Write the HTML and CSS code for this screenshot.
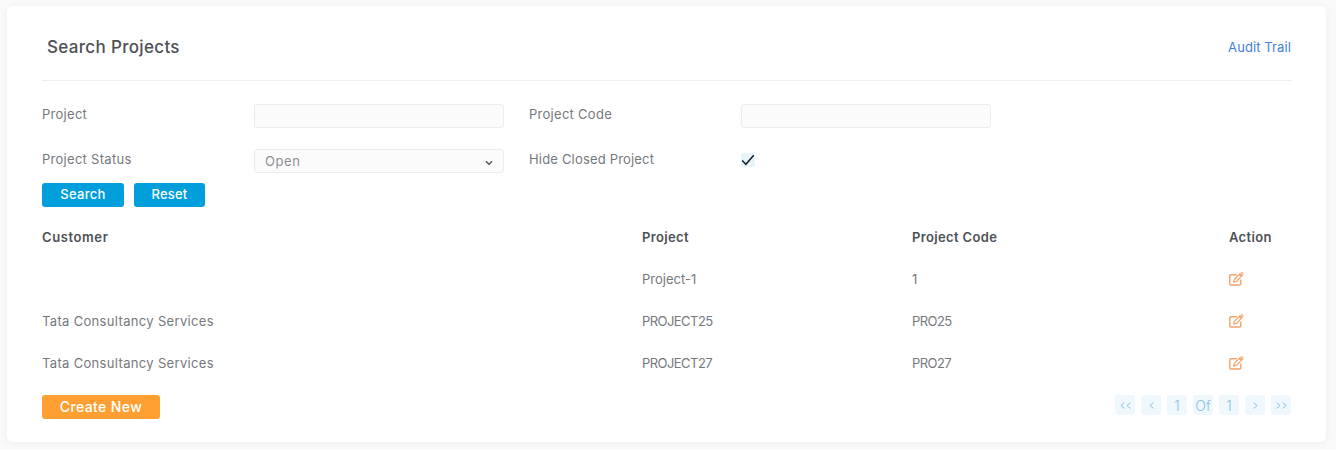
FILE: index.html
```html
<!DOCTYPE html>
<html lang="en">
<head>
<meta charset="utf-8">
<title>Search Projects</title>
<link rel="stylesheet" href="styles.css">
</head>
<body>
<svg class="sprite" width="0" height="0" aria-hidden="true">
  <symbol id="edit" viewBox="0 0 15 14">
    <path d="M11.800 7.400v4.600a1 1 0 0 1-1 1H1.800a1 1 0 0 1-1-1V3.700a1 1 0 0 1 1-1h6" fill="none" stroke="currentColor" stroke-width="1.400"/>
    <path d="M4.800 10l.6-2.600 5.800-5.800 2 2-5.800 5.800zM10.300 2.500l2 2" fill="none" stroke="currentColor" stroke-width="1.200"/>
    <circle cx="12.900" cy="1.800" r="1.200" fill="#fff" stroke="currentColor" stroke-width="1"/>
  </symbol>
  <symbol id="left" viewBox="0 0 5 7"><path d="M4.400.7L.9 3.500l3.500 2.800" fill="none" stroke="currentColor" stroke-width="1"/></symbol>
  <symbol id="right" viewBox="0 0 5 7"><path d="M.6.7l3.500 2.800L.6 6.300" fill="none" stroke="currentColor" stroke-width="1"/></symbol>
</svg>
<main class="card">
  <header class="card-head">
    <h1 class="title">Search Projects</h1>
    <a class="audit" href="#">Audit Trail</a>
  </header>
  <form class="filters">
    <label class="lbl">Project</label>
    <input class="field" type="text">
    <label class="lbl">Project Code</label>
    <input class="field" type="text">
    <label class="lbl">Project Status</label>
    <div class="field select">
      <span>Open</span>
      <svg class="chev" viewBox="0 0 8 6" width="8" height="6"><path d="M1 1.200l3 3 3-3" fill="none" stroke="#555" stroke-width="1.400"/></svg>
    </div>
    <label class="lbl lbl-tight">Hide Closed Project</label>
    <div class="check">
      <svg viewBox="0 0 14 14" width="14" height="14"><path d="M1.200 7.400l3.700 3.900 7.800-9" fill="none" stroke="#15202b" stroke-width="1.500"/></svg>
    </div>
  </form>
  <div class="actions">
    <button class="btn btn-search" type="button">Search</button>
    <button class="btn btn-reset" type="button">Reset</button>
  </div>
  <table class="results">
    <thead>
      <tr><th class="c1">Customer</th><th class="c2">Project</th><th class="c3">Project Code</th><th class="c4">Action</th></tr>
    </thead>
    <tbody>
      <tr><td></td><td class="plain">Project-1</td><td class="caps">1</td><td><svg class="edit"><use href="#edit"/></svg></td></tr>
      <tr><td class="name">Tata Consultancy Services</td><td class="caps">PROJECT25</td><td class="caps">PRO25</td><td><svg class="edit"><use href="#edit"/></svg></td></tr>
      <tr><td class="name">Tata Consultancy Services</td><td class="caps">PROJECT27</td><td class="caps">PRO27</td><td><svg class="edit"><use href="#edit"/></svg></td></tr>
    </tbody>
  </table>
  <footer class="card-foot">
    <button class="btn btn-create" type="button">Create New</button>
    <nav class="pager">
      <span class="pg"><svg class="arr"><use href="#left"/></svg><svg class="arr"><use href="#left"/></svg></span>
      <span class="pg"><svg class="arr"><use href="#left"/></svg></span>
      <span class="pg">1</span>
      <span class="pg">Of</span>
      <span class="pg">1</span>
      <span class="pg"><svg class="arr"><use href="#right"/></svg></span>
      <span class="pg"><svg class="arr"><use href="#right"/></svg><svg class="arr"><use href="#right"/></svg></span>
    </nav>
  </footer>
</main>
</body>
</html>
```
FILE: styles.css
```css
* { box-sizing: border-box; }
html, body { margin: 0; }
body {
  background: #f9f9f9;
  padding: 6px 10px 8px 7px;
  font-family: "Inter", "Liberation Sans", sans-serif;
  color: #75797e;
  font-size: 13px;
}
.sprite { position: absolute; }
.card {
  background: #fff;
  border-radius: 6px;
  box-shadow: 0 1px 8px rgba(0, 0, 0, .05);
  height: 436px;
  padding: 0 34px 0 35px;
}
.card-head {
  height: 75px;
  border-bottom: 1px solid #eeeeee;
  display: flex;
  align-items: center;
  justify-content: space-between;
  padding: 8px 0 0 5px;
}
.title {
  margin: 0;
  font-size: 17px;
  font-weight: 500;
  color: #4d5156;
  letter-spacing: .33px;
}
.audit {
  color: #3f7fdc;
  text-decoration: none;
  font-size: 13px;
  letter-spacing: .1px;
  margin-right: 1px;
}
.filters {
  display: grid;
  grid-template-columns: 187px 250px 187px 250px;
  column-gap: 25px;
  grid-auto-rows: 24px;
  row-gap: 21px;
  margin-top: 23px;
  align-items: start;
}
.lbl { line-height: 20px; letter-spacing: .28px; }
.lbl-tight { letter-spacing: .18px; }
.field {
  width: 250px;
  height: 24px;
  border: 1px solid #ececec;
  border-radius: 3px;
  background: #fbfbfb;
  outline: none;
}
.select {
  display: flex;
  align-items: center;
  justify-content: space-between;
  padding: 0 10px;
  color: #8b8f94;
  letter-spacing: .6px;
}
.chev { margin-top: 3px; }
.check {
  width: 14px;
  height: 14px;
  margin-top: 4px;
  background: #e8f3fa;
  border-radius: 3px;
}
.check svg { display: block; }
.actions {
  display: flex;
  gap: 10px;
  margin-top: 10px;
}
.btn {
  height: 24px;
  border: 0;
  border-radius: 3px;
  color: #fff;
  font: 500 13px "Inter", "Liberation Sans", sans-serif;
  padding: 0 0 2px;
}
.btn-search { width: 82px; background: #009fdc; letter-spacing: .3px; }
.btn-reset { width: 71px; background: #009fdc; letter-spacing: .2px; }
.btn-create { width: 118px; background: #ff9f31; font-size: 14px; letter-spacing: .4px; }
.results {
  width: 1250px;
  border-collapse: collapse;
  table-layout: fixed;
  margin-top: 9px;
}
.results th {
  text-align: left;
  font-weight: 600;
  color: #4d5156;
  height: 42px;
  padding: 0;
  letter-spacing: .35px;
}
.results .c1 { letter-spacing: .6px; }
.results td { height: 42px; padding: 0; }
.results .name { letter-spacing: .33px; }
.results .caps { letter-spacing: -.55px; }
.c1 { width: 600px; }
.c2 { width: 270px; }
.c3 { width: 317px; }
.c4 { width: 63px; }
.edit {
  display: block;
  width: 15px;
  height: 14px;
  color: #f5a26a;
}
.card-foot {
  display: flex;
  justify-content: space-between;
  align-items: flex-start;
  margin-top: 11px;
}
.pager { display: flex; gap: 6px; margin-right: 1px; }
.pg {
  width: 20px;
  height: 20px;
  display: flex;
  align-items: center;
  justify-content: center;
  gap: 1px;
  background: #eff8fd;
  border-radius: 3px;
  color: #8cc1e0;
  font-size: 14px;
  font-weight: 300;
}
.arr { width: 5px; height: 7px; }
```
